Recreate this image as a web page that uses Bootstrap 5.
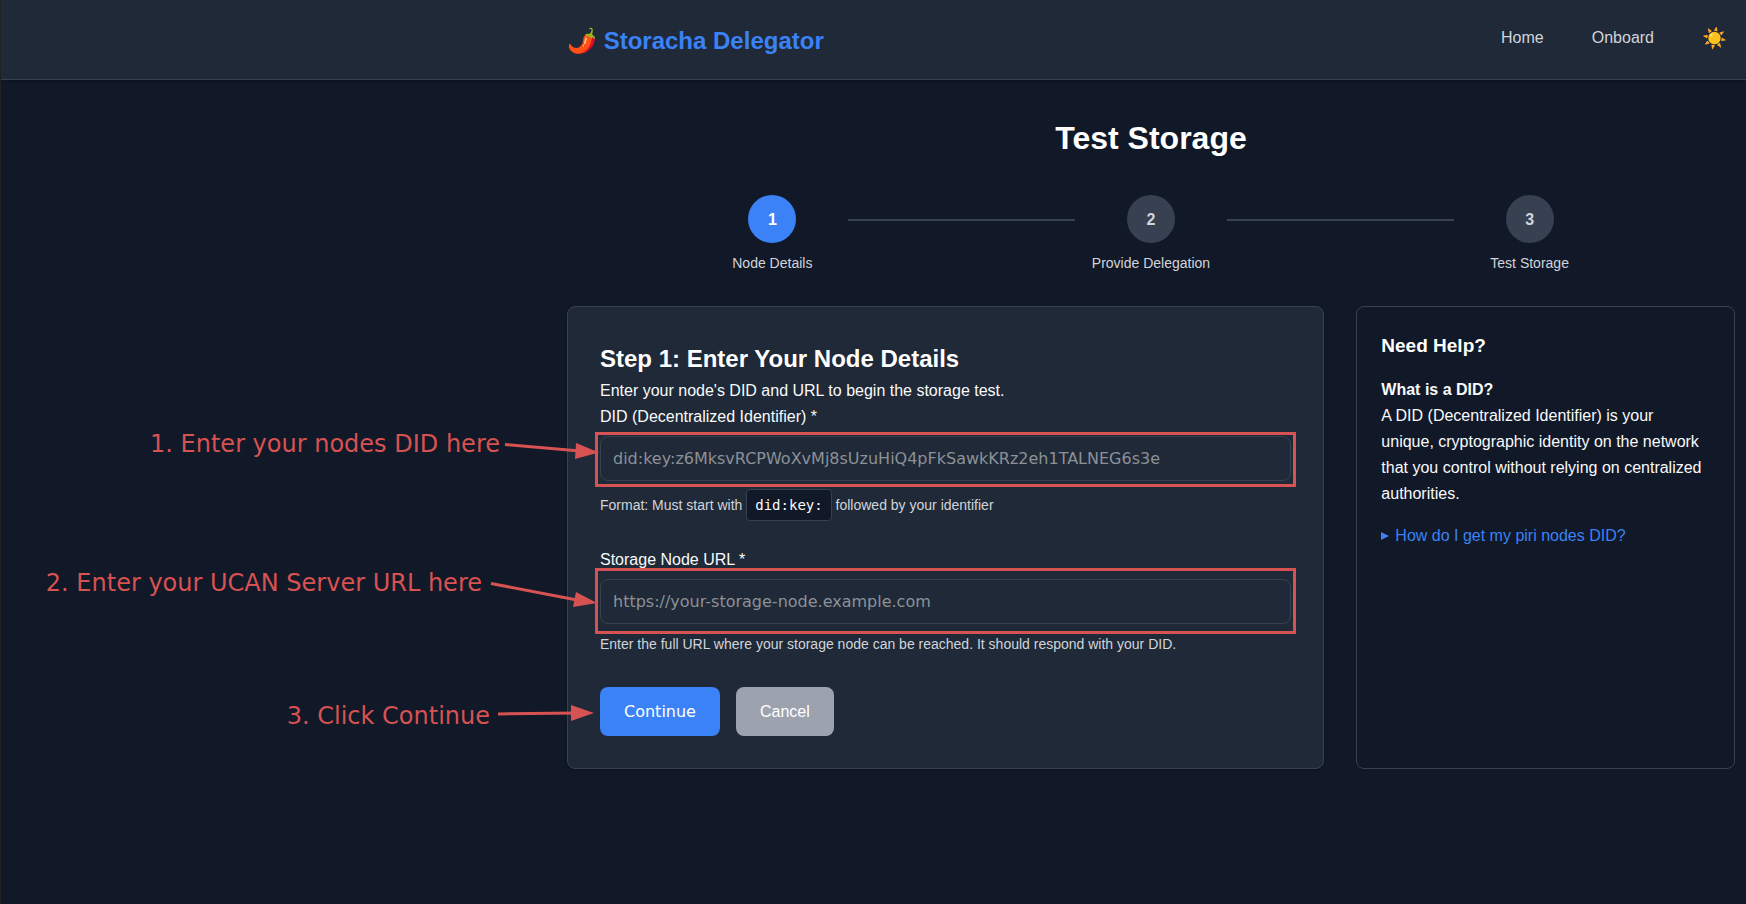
<!DOCTYPE html>
<html lang="en" data-bs-theme="dark">
<head>
<meta charset="utf-8">
<meta name="viewport" content="width=device-width, initial-scale=1">
<title>Storacha Delegator</title>
<link href="https://cdn.jsdelivr.net/npm/bootstrap@5.3.0/dist/css/bootstrap.min.css" rel="stylesheet">
<style>
  :root {
    --page: #111827;
    --panel: #1f2937;
    --line: #374151;
    --accent: #3b82f6;
    --soft: #d1d5db;
    --note: #d75252;
  }
  body {
    background: var(--page);
    color: #f9fafb;
    font-family: "Liberation Sans", Arial, sans-serif;
    font-size: 16px;
    line-height: 26px;
    min-height: 100vh;
    border-left: 1px solid #222;
    overflow-x: hidden;
  }
  .page-col { max-width: 1168px; margin-left: auto; margin-right: 11px; }
  .site-header { background: var(--panel); border-bottom: 1px solid var(--line); box-shadow: 0 1px 3px rgba(0,0,0,.3); }
  .site-header .page-col { height: 79px; }
  .site-brand { color: var(--accent); font-size: 24px; font-weight: 700; line-height: 38px; padding-top: 2px; }
  .site-nav { gap: 48px; padding-bottom: 4px; }
  .site-nav a { color: var(--soft); }
  .theme-toggle { background: none; border: 0; padding: 0 8px 0 0; font-size: 20px; line-height: 26px; }
  h1 { font-size: 32px; line-height: 53px; font-weight: 700; }
  h2 { font-size: 24px; line-height: 39px; font-weight: 700; }
  h3 { font-size: 19px; line-height: 30px; font-weight: 700; }
  .step-list { margin: 30px 0 31px; }
  .step-dot { width: 48px; height: 48px; padding-top: 2px; background: var(--line); color: var(--soft); font-weight: 700; }
  .step-on .step-dot { background: var(--accent); color: #fff; }
  .step-item:not(:last-child)::after { content: ""; position: absolute; top: 24px; left: 70%; width: 60%; height: 2px; background: var(--line); }
  .hint { font-size: 14px; line-height: 24px; color: var(--soft); }
  .panels { display: grid; grid-template-columns: minmax(0, 2fr) minmax(0, 1fr); gap: 32px; }
  .panel { border: 1px solid var(--line); border-radius: 8px; }
  .panel-form { background: var(--panel); padding: 32px; box-shadow: 0 1px 3px rgba(0,0,0,.3); }
  .panel-help { padding: 24px; }
  .field-group { margin-bottom: 26px; }
  .field-label { display: block; margin-bottom: 6px; }
  .form-control, .form-control:focus {
    height: 45px; padding: 12px; border: 1px solid var(--line); border-radius: 8px;
    background: var(--panel); color: #f9fafb; font: 16px/19px "DejaVu Sans", sans-serif;
  }
  .form-control::placeholder { color: #8c9197; opacity: 1; }
  .hint code {
    display: inline-block; padding: 4px 8px; border: 1px solid var(--line); border-radius: 4px;
    background: var(--page); color: #f9fafb; font: 14px/22px "DejaVu Sans Mono", monospace;
  }
  .actions { margin-top: 31px; }
  .action { padding: 12px 24px; border: 0; border-radius: 8px; font-size: 16px; line-height: 25px; color: #fff; text-decoration: none; }
  .action-go { background: var(--accent); font-family: "DejaVu Sans", sans-serif; }
  .action-stop { background: #9ca3af; }
  summary { display: flex; align-items: center; gap: 6px; color: var(--accent); }
  summary::before { content: ""; border-left: 8px solid; border-top: 4px solid transparent; border-bottom: 4px solid transparent; }
  details[open] summary::before { transform: rotate(90deg); }
  /* Walk-through notes laid over the form */
  .outline { position: absolute; border: 3px solid var(--note); pointer-events: none; }
  .outline-tight { inset: -4px -5px -6px -5px; }
  .outline-loose { inset: -11px -5px -10px -5px; }
  .callout { position: absolute; right: 100%; white-space: nowrap; color: var(--note); font: 24px/28px "DejaVu Sans", sans-serif; }
  .callout svg { overflow: visible; flex: none; stroke: var(--note); fill: var(--note); stroke-width: 3; }
  .callout polygon { stroke: none; }
  .callout-did { top: -6px; }
  .callout-url { top: -10px; }
  .callout-go { top: 15px; }
</style>
</head>
<body>
<header class="site-header">
  <div class="page-col d-flex justify-content-between align-items-center">
    <a class="site-brand text-decoration-none" href="#">🌶️ Storacha Delegator</a>
    <nav class="site-nav d-flex align-items-center">
      <a class="text-decoration-none" href="#">Home</a>
      <a class="text-decoration-none" href="#">Onboard</a>
      <button class="theme-toggle" type="button" aria-label="Toggle theme">☀️</button>
    </nav>
  </div>
</header>

<main class="page-col pt-4 pb-4">
  <h1 class="text-center mt-2 mb-0">Test Storage</h1>
  <ol class="step-list list-unstyled d-flex px-3">
    <li class="step-item step-on col-4 position-relative text-center">
      <div class="step-dot rounded-circle d-flex align-items-center justify-content-center mx-auto mb-2">1</div>
      <div class="hint">Node Details</div>
    </li>
    <li class="step-item col-4 position-relative text-center">
      <div class="step-dot rounded-circle d-flex align-items-center justify-content-center mx-auto mb-2">2</div>
      <div class="hint">Provide Delegation</div>
    </li>
    <li class="step-item col-4 position-relative text-center">
      <div class="step-dot rounded-circle d-flex align-items-center justify-content-center mx-auto mb-2">3</div>
      <div class="hint">Test Storage</div>
    </li>
  </ol>

  <div class="panels">
    <form class="panel panel-form">
      <h2 class="mb-0">Step 1: Enter Your Node Details</h2>
      <p class="mb-0">Enter your node's DID and URL to begin the storage test.</p>

      <div class="field-group">
        <label class="field-label" for="did">DID (Decentralized Identifier) *</label>
        <div class="position-relative mb-2">
          <input class="form-control" id="did" type="text" placeholder="did:key:z6MksvRCPWoXvMj8sUzuHiQ4pFkSawkKRz2eh1TALNEG6s3e">
          <div class="outline outline-tight"></div>
          <div class="callout callout-did d-flex">
            <span>1. Enter your nodes DID here</span>
            <svg width="100" height="28" aria-hidden="true"><path d="M5 14.500L80 21"/><polygon points="76,13 99,22.500 75,29"/></svg>
          </div>
        </div>
        <div class="hint">Format: Must start with <code>did:key:</code> followed by your identifier</div>
      </div>

      <div>
        <label class="field-label" for="url">Storage Node URL *</label>
        <div class="position-relative mb-2">
          <input class="form-control" id="url" type="url" placeholder="https://your-storage-node.example.com">
          <div class="outline outline-loose"></div>
          <div class="callout callout-url d-flex">
            <span>2. Enter your UCAN Server URL here</span>
            <svg width="118" height="28" aria-hidden="true"><path d="M9 14.500L95 31"/><polygon points="94,23 115,34 91,38"/></svg>
          </div>
        </div>
        <div class="hint">Enter the full URL where your storage node can be reached. It should respond with your DID.</div>
      </div>

      <div class="actions position-relative d-flex gap-3">
        <button class="action action-go" type="button">Continue</button>
        <a class="action action-stop" href="#">Cancel</a>
        <div class="callout callout-go d-flex">
          <span>3. Click Continue</span>
          <svg width="110" height="28" aria-hidden="true"><path d="M8 12L85 11"/><polygon points="81,3 104,11 81,19"/></svg>
        </div>
      </div>
    </form>

    <aside class="panel panel-help">
      <h3 class="mb-3">Need Help?</h3>
      <p class="mb-3"><strong>What is a DID?</strong><br>A DID (Decentralized Identifier) is your unique, cryptographic identity on the network that you control without relying on centralized authorities.</p>
      <details>
        <summary>How do I get my piri nodes DID?</summary>
      </details>
    </aside>
  </div>
</main>
<script src="https://cdn.jsdelivr.net/npm/bootstrap@5.3.0/dist/js/bootstrap.bundle.min.js"></script>
</body>
</html>
